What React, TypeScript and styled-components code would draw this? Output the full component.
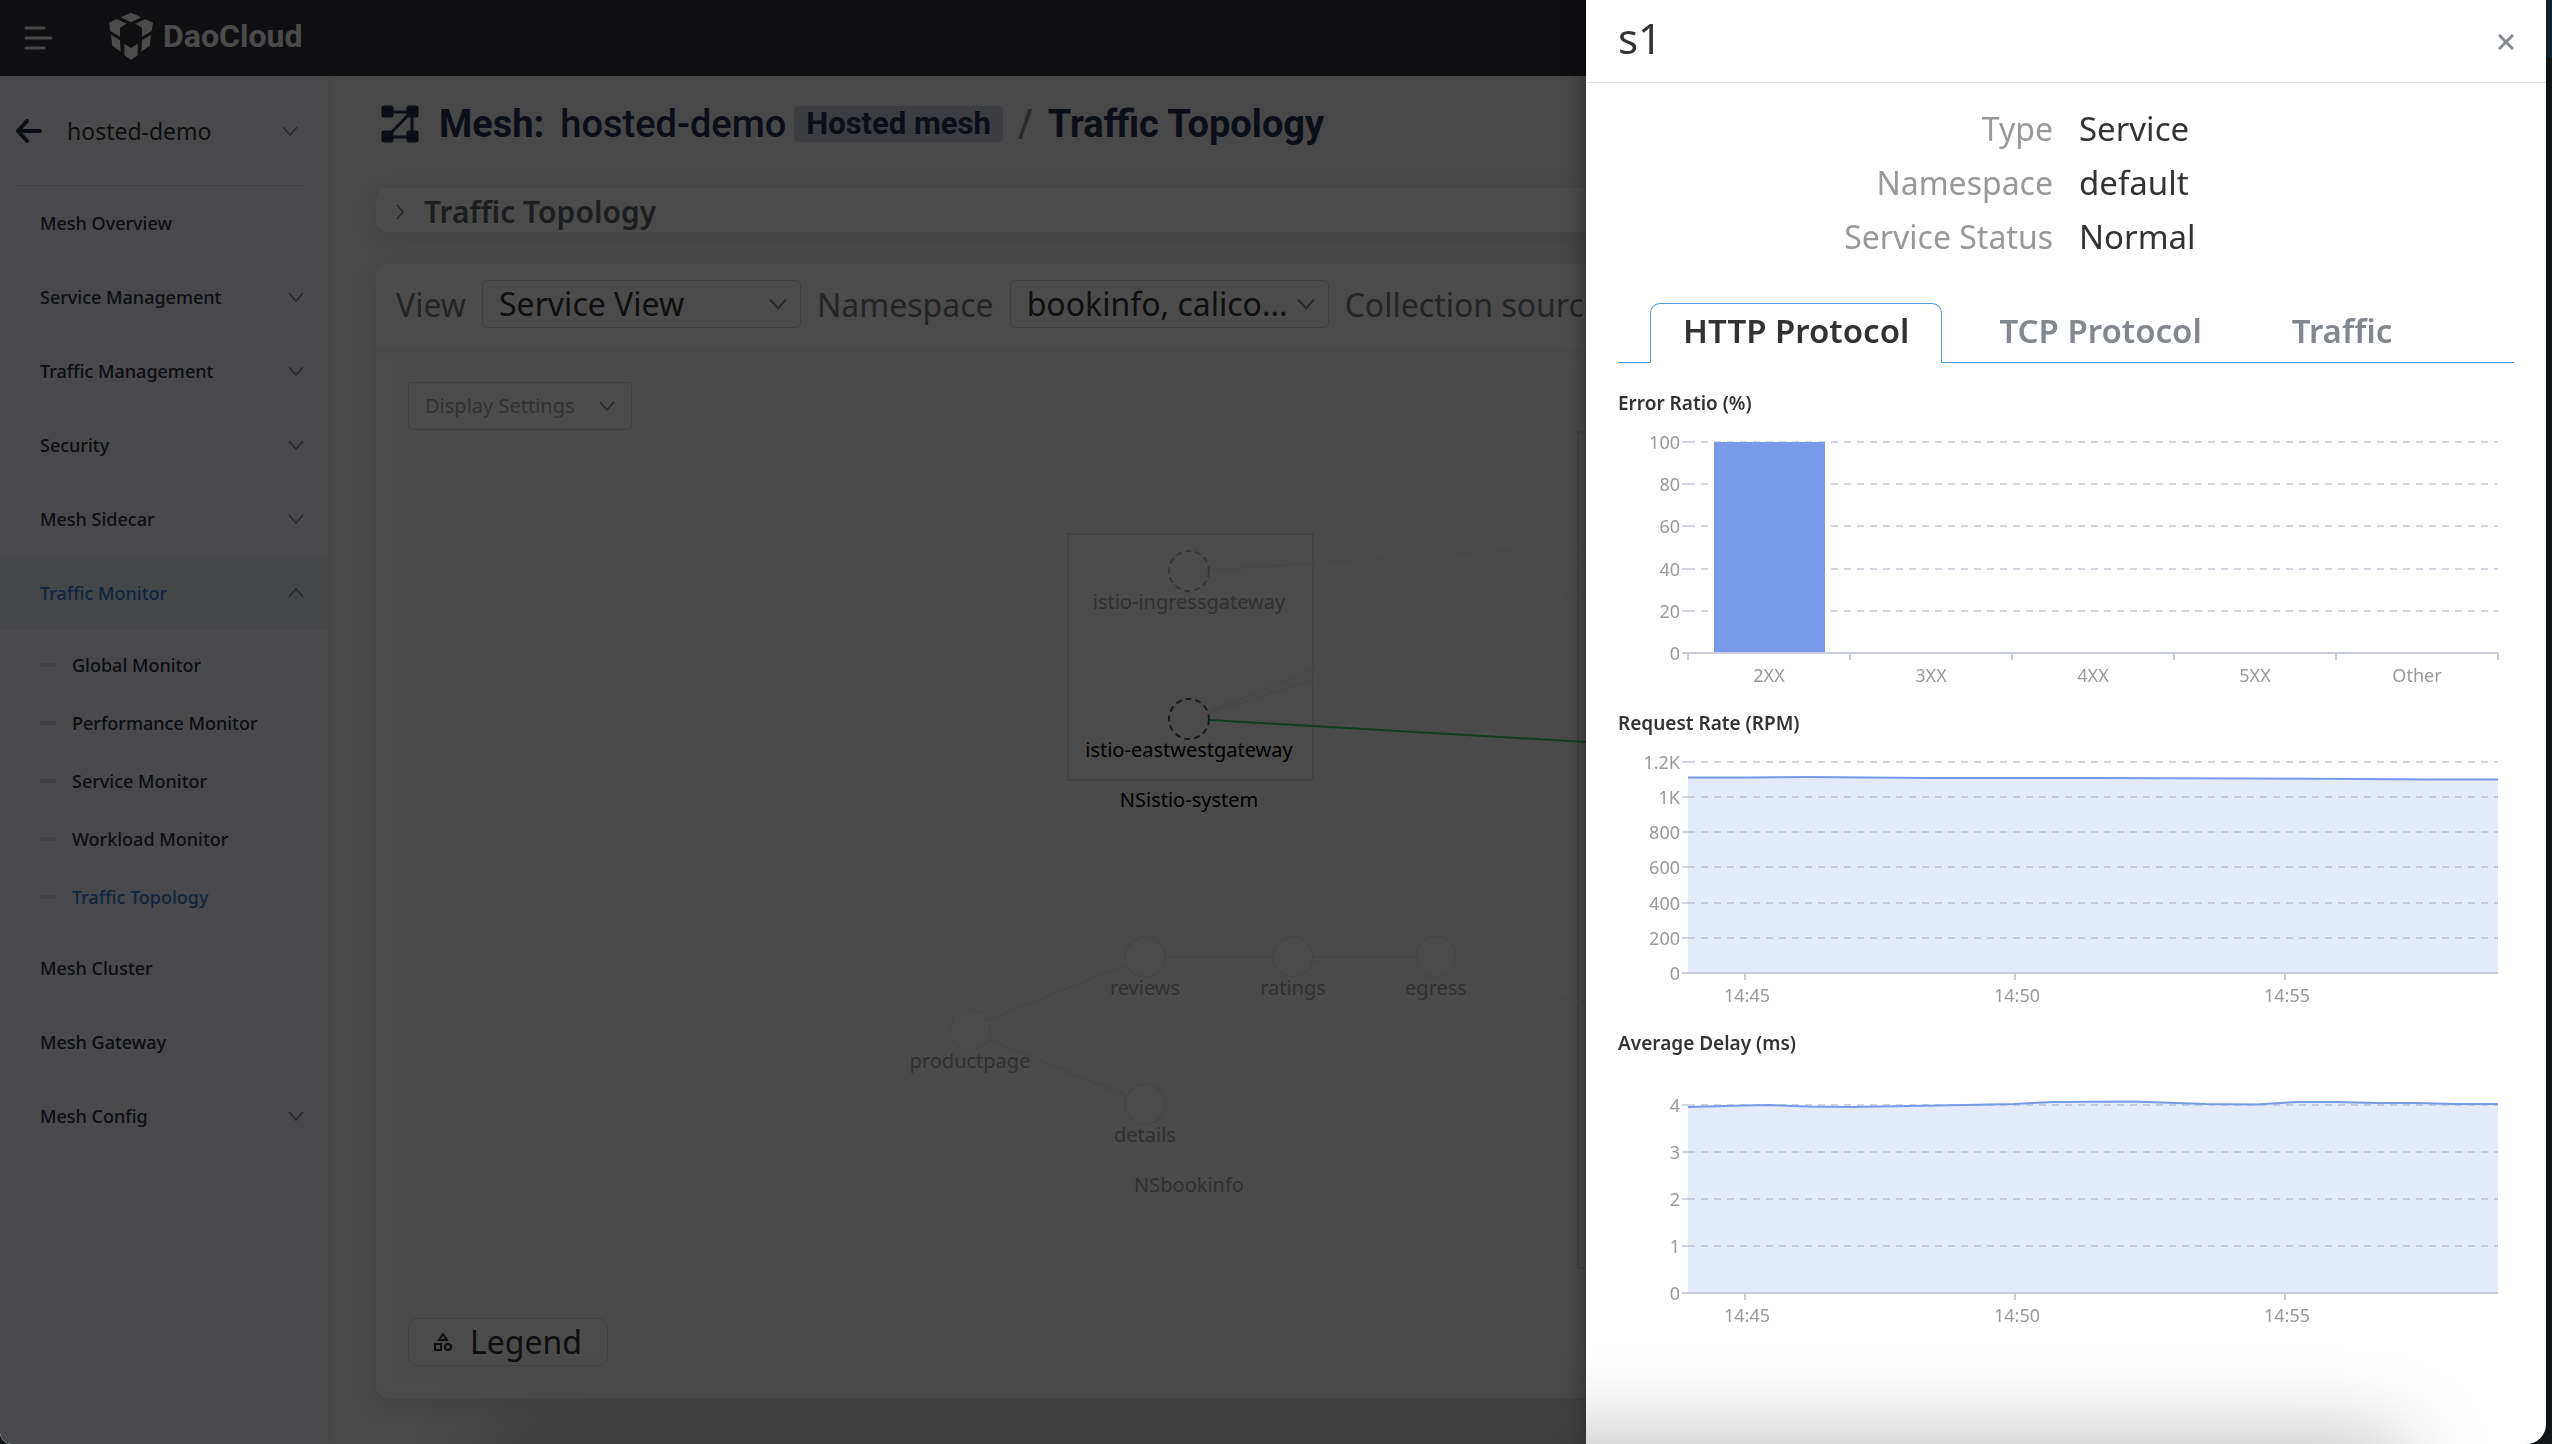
import React, { useState } from "react";
import styled, { createGlobalStyle } from "styled-components";

const sans = `"Noto Sans", "Open Sans", sans-serif`;
const heading = `Roboto, "Noto Sans", sans-serif`;

const GlobalStyle = createGlobalStyle`
  *, *::before, *::after { box-sizing: border-box; }
  body {
    margin: 0;
    font-family: ${sans};
    font-size: 18px;
    color: #333;
    background: linear-gradient(#13243a 58px, #15181a 58px);
    background-attachment: fixed;
  }
  button, select { font: inherit; color: inherit; }
`;

const Window = styled.div`
  position: relative;
  display: flex;
  flex-direction: column;
  min-height: 100vh;
  margin-right: 6px;
  overflow: hidden;
  border-radius: 0 0 20px 12px;
  background: #f0f0f0;
`;

const TopBar = styled.header`
  display: flex;
  align-items: center;
  height: 76px;
  padding: 0 24px;
  gap: 56px;
  background: #32353c;
  color: #fafafa;
`;

const IconButton = styled.button`
  display: flex;
  padding: 0;
  border: 0;
  background: none;
  cursor: pointer;
`;

const Brand = styled.a`
  display: flex;
  align-items: center;
  gap: 10px;
  height: 72px;
  padding-bottom: 4px;
  color: inherit;
  font: 700 32px/40px ${heading};
  text-decoration: none;
`;

const Body = styled.div`
  display: flex;
  flex: 1;
`;

const Sidebar = styled.nav`
  flex: none;
  width: 328px;
  background: #f3f6fb;
  box-shadow: 2px 0 8px rgba(20, 40, 20, 0.08);
  color: #2b2f40;
`;

const Switcher = styled.div`
  display: flex;
  align-items: center;
  height: 110px;
  margin: 0 24px 0 16px;
  gap: 24px;
  border-bottom: 1px solid #d8dce3;
  font-size: 23px;
  color: #333;
  & > span { flex: 1; }
  & > svg { margin-right: 6px; }
`;

const Menu = styled.ul`
  margin: 0;
  padding: 0;
  list-style: none;
`;

const MenuButton = styled.button<{ $active?: boolean }>`
  display: flex;
  align-items: center;
  justify-content: space-between;
  width: 100%;
  height: 74px;
  padding: 0 24px 0 40px;
  border: 0;
  background: ${(p) => (p.$active ? "#e8ebf0" : "transparent")};
  color: ${(p) => (p.$active ? "#3a78d0" : "inherit")};
  font-weight: 500;
  cursor: pointer;
`;

const SubMenu = styled(Menu)`
  padding: 6px 0 5px;
`;

const SubLink = styled.a<{ $active?: boolean }>`
  display: flex;
  align-items: center;
  gap: 16px;
  height: 58px;
  padding-left: 40px;
  color: ${(p) => (p.$active ? "#3a78d0" : "inherit")};
  font-weight: 500;
  text-decoration: none;
  &::before {
    content: "";
    width: 16px;
    height: 4px;
    background: #d3d6db;
  }
`;

const Main = styled.main`
  display: flex;
  flex: 1;
  flex-direction: column;
  min-width: 0;
  padding: 0 48px 46px;
`;

const PageTitle = styled.div`
  display: flex;
  align-items: center;
  height: 96px;
  margin-bottom: 16px;
  padding-left: 5px;
  color: #252f4a;
  font: 500 38px/48px ${heading};
  white-space: nowrap;
  & > svg { margin-right: 20px; }
  & > strong { font-weight: 700; }
`;

const MeshName = styled.span`
  margin: 0 8px 0 16px;
`;

const Tag = styled.span`
  padding: 0 12px;
  border-radius: 4px;
  background: #c5cbdb;
  font-size: 31px;
  font-weight: 700;
  line-height: 36px;
`;

const Slash = styled.span`
  margin: 0 15px;
  color: #8a8d94;
`;

const Card = styled.section`
  border-radius: 12px;
  background: #fafafa;
  box-shadow: 0 6px 24px rgba(30, 50, 70, 0.12);
`;

const Collapse = styled(Card)`
  margin-bottom: 32px;
  & > button {
    display: flex;
    align-items: center;
    gap: 16px;
    width: 100%;
    height: 44px;
    padding: 4px 16px 0;
    border: 0;
    background: none;
    color: #606266;
    font-size: 30px;
    font-weight: 600;
    line-height: 40px;
    cursor: pointer;
  }
`;

const Board = styled(Card)`
  display: flex;
  flex: 1;
  flex-direction: column;
  overflow: hidden;
`;

const Toolbar = styled.div`
  display: flex;
  align-items: center;
  gap: 16px;
  height: 86px;
  padding: 0 20px 6px;
  box-shadow: 0 4px 10px rgba(0, 0, 0, 0.04);
  color: #77797d;
  font-size: 32px;
  white-space: nowrap;
`;

const SelectBox = styled.span`
  display: grid;
  align-items: center;
  width: 319px;
  & > * { grid-area: 1 / 1; }
  & > svg { justify-self: end; margin-right: 14px; pointer-events: none; }
`;

const Select = styled.select`
  width: 100%;
  height: 48px;
  padding: 0 36px 0 16px;
  appearance: none;
  border: 1px solid #cdd0d6;
  border-radius: 5px;
  background: transparent;
  color: #333;
  font-size: 32px;
  line-height: 44px;
`;

const Canvas = styled.div`
  position: relative;
  display: flex;
  flex: 1;
  flex-direction: column;
  align-items: flex-start;
  justify-content: space-between;
  margin: 14px 16px 16px;
  padding: 18px 16px 16px;
  background: #f7f7f7;
`;

const Graph = styled.svg`
  position: absolute;
  inset: 0;
  width: 100%;
  height: 100%;
  font: 20px ${sans};
  text-anchor: middle;
`;

const CanvasButton = styled.button<{ $legend?: boolean }>`
  position: relative;
  display: flex;
  align-items: center;
  justify-content: ${(p) => (p.$legend ? "center" : "space-between")};
  gap: 18px;
  width: ${(p) => (p.$legend ? "200px" : "224px")};
  height: 48px;
  padding: 0 16px;
  border: 1px solid ${(p) => (p.$legend ? "#d4d6da" : "#c8cbd0")};
  border-radius: ${(p) => (p.$legend ? "10px" : "5px")};
  background: #fafafa;
  color: ${(p) => (p.$legend ? "#333" : "#a3a5a9")};
  font-size: ${(p) => (p.$legend ? "32px" : "20px")};
  line-height: 44px;
  cursor: pointer;
`;

const Mask = styled.div`
  position: absolute;
  inset: 0;
  background: rgba(0, 0, 0, 0.7);
`;

const Drawer = styled.aside`
  position: fixed;
  top: 0;
  right: 6px;
  bottom: 0;
  width: 960px;
  max-width: 100%;
  border-bottom-right-radius: 20px;
  background: #fff;
  box-shadow: 0 0 24px rgba(0, 0, 0, 0.4);
  overflow: hidden;
`;

const DrawerHeader = styled.header`
  display: flex;
  align-items: center;
  justify-content: space-between;
  height: 83px;
  padding: 2px 32px 0;
  border-bottom: 1px solid #e0e2ea;
  color: #84888f;
  & > h1 {
    margin: 0;
    padding-bottom: 8px;
    color: #333;
    font-size: 42px;
    font-weight: 400;
    line-height: 48px;
  }
`;

const DrawerBody = styled.div`
  padding: 19px 32px 0;
`;

const Details = styled.dl`
  display: grid;
  grid-template-columns: 1fr 1fr;
  column-gap: 26px;
  margin: 0 0 39px;
  font-size: 32px;
  line-height: 54px;
  & > dt { color: #999; text-align: right; }
  & > dd { margin: 0; font-size: 33px; }
`;

const Tabs = styled.div`
  display: flex;
  align-items: flex-end;
  gap: 24px;
  padding-left: 32px;
  margin-bottom: 24px;
  box-shadow: inset 0 -1px 0 #4f9be0;
`;

const Tab = styled.button<{ $active: boolean }>`
  height: 60px;
  padding: 0 32px 6px;
  border: 1px solid ${(p) => (p.$active ? "#4f9be0" : "transparent")};
  border-bottom: 0;
  border-radius: 10px 10px 0 0;
  background: ${(p) => (p.$active ? "#fff" : "transparent")};
  color: ${(p) => (p.$active ? "#333" : "#83888f")};
  font-size: 33px;
  font-weight: 600;
  line-height: 44px;
  cursor: pointer;
`;

const ChartTitle = styled.h2`
  margin: 0;
  font-size: 19px;
  font-weight: 600;
  line-height: 32px;
`;

const ChartSvg = styled.svg`
  display: block;
  width: 100%;
  height: auto;
  font: 18px ${sans};
  & text { fill: #999; }
`;

const DockShade = styled.div`
  position: fixed;
  top: 100vh;
  left: 500px;
  right: 150px;
  height: 80px;
  box-shadow: 0 0 90px rgba(0, 0, 0, 0.3);
  pointer-events: none;
`;

type Dir = "down" | "up" | "right";
const Chevron = ({ dir = "down", size = 16 }: { dir?: Dir; size?: number }) => (
  <svg width={size} height={size} viewBox="0 0 16 16" fill="none" stroke="#85888f" strokeWidth="1.8" aria-hidden="true">
    <path d={dir === "down" ? "M1 4l7 8 7-8" : dir === "up" ? "M1 12l7-8 7 8" : "M5 1l6 7-6 7"} />
  </svg>
);

const Logo = () => (
  <svg width="44" height="48" viewBox="57 36 132 142" fill="currentColor" aria-hidden="true">
    <path d="M123 37l31 14-31 15-31-15zM80 56l30 14-20 12v27L61 92l-4-25zM166 56l-30 14 20 12v27l29-17 4-25zM63 103l27 17 2 34-25-18zM183 103l-27 17-2 34 25-18zM103 130l20 13 20-13v35l-20 13-20-13z" />
  </svg>
);

const MeshIcon = () => (
  <svg width="38" height="38" viewBox="0 0 38 38" fill="#252f4a" stroke="#252f4a" strokeWidth="3" aria-hidden="true">
    <path d="M6 7h26M6 32h26M31 6v26M31 6L7 31" fill="none" />
    <rect x="2" y="2" width="9" height="9" rx="1" />
    <rect x="27" y="2" width="9" height="9" rx="1" />
    <rect x="2" y="27" width="9" height="9" rx="1" />
    <rect x="27" y="27" width="9" height="9" rx="1" />
  </svg>
);

type Item = { label: string; plain?: boolean; children?: string[] };
const menu: Item[] = [
  { label: "Mesh Overview", plain: true },
  { label: "Service Management" },
  { label: "Traffic Management" },
  { label: "Security" },
  { label: "Mesh Sidecar" },
  {
    label: "Traffic Monitor",
    children: ["Global Monitor", "Performance Monitor", "Service Monitor", "Workload Monitor", "Traffic Topology"],
  },
  { label: "Mesh Cluster", plain: true },
  { label: "Mesh Gateway", plain: true },
  { label: "Mesh Config" },
];

type GraphNode = { x: number; y: number; name: string; tone: "strong" | "dim" | "faint"; dashed?: boolean };
const nodes: GraphNode[] = [
  { x: 797, y: 207, name: "istio-ingressgateway", tone: "dim", dashed: true },
  { x: 797, y: 355, name: "istio-eastwestgateway", tone: "strong", dashed: true },
  { x: 753, y: 593, name: "reviews", tone: "faint" },
  { x: 901, y: 593, name: "ratings", tone: "faint" },
  { x: 1044, y: 593, name: "egress", tone: "faint" },
  { x: 578, y: 666, name: "productpage", tone: "faint", dashed: true },
  { x: 753, y: 740, name: "details", tone: "faint" },
];
const ring = { strong: "#555", dim: "#b0b0b0", faint: "#ececee" };
const ink = { strong: "#000", dim: "#a0a0a0", faint: "#a0a0a0" };

const Topology = () => (
  <Graph role="img" aria-label="Service topology">
    <defs>
      <marker id="arrow" viewBox="0 0 12 12" refX="12" refY="6" markerWidth="12" markerHeight="12" markerUnits="userSpaceOnUse" orient="auto">
        <path d="M0 0l12 6-12 6z" fill="#e6ebea" />
      </marker>
    </defs>
    <rect x="676" y="170" width="245" height="246" fill="#fafafa" stroke="#dcdee2" strokeWidth="2" />
    <rect x="504" y="556" width="589" height="246" fill="#f9f9f9" stroke="#f3f5f5" strokeWidth="2" />
    <rect x="1186" y="68" width="700" height="836" fill="#f9f9f9" stroke="#dcdee2" strokeWidth="2" />
    <g stroke="#eef2f1" strokeWidth="2" fill="none">
      <path d="M818 206l376-25M818 347l376-150M818 349l376-121M922 597l272 41" />
      <path d="M774 593h106M922 593h100M597 656l136-55M597 676l136 55" stroke="#e8edec" markerEnd="url(#arrow)" />
    </g>
    <path d="M818 356l376 22" stroke="#3cc86a" strokeWidth="2" />
    {nodes.map((n) => (
      <g key={n.name}>
        <circle cx={n.x} cy={n.y} r="20" fill="#fafafa" stroke={ring[n.tone]} strokeWidth="2" strokeDasharray={n.dashed ? "6 4" : undefined} />
        <text x={n.x} y={n.y + 38} fill={ink[n.tone]}>{n.name}</text>
      </g>
    ))}
    <text x="797" y="443">NSistio-system</text>
    <text x="797" y="828" fill="#a0a0a0">NSbookinfo</text>
  </Graph>
);

const LEFT = 70;
const RIGHT = 880;
const BASE = 234;

type ChartProps = {
  title: string;
  grid: [string, number][];
  children: React.ReactNode;
};
const Chart = ({ title, grid, children }: ChartProps) => (
  <section>
    <ChartTitle>{title}</ChartTitle>
    <ChartSvg viewBox="0 0 896 288" role="img" aria-label={title}>
      {grid.map(([label, y]) => (
        <g key={label} stroke="#d3d6de" strokeWidth="2">
          <path d={`M${LEFT - 6} ${y}h6`} />
          <path d={`M${LEFT} ${y}H${RIGHT}`} strokeDasharray="7 6" />
          <text x={LEFT - 8} y={y + 7} textAnchor="end" stroke="none">{label}</text>
        </g>
      ))}
      {children}
      <path d={`M${LEFT - 6} ${BASE}H${RIGHT}`} stroke="#c8cdd8" strokeWidth="2" />
      <text x={LEFT - 8} y={BASE + 7} textAnchor="end">0</text>
    </ChartSvg>
  </section>
);

const Area = ({ line }: { line: string }) => (
  <>
    <path d={`M${line}L${RIGHT} ${BASE}H${LEFT}z`} fill="#789ae9" fillOpacity="0.2" />
    <path d={`M${line}`} fill="none" stroke="#789ae9" strokeWidth="2" />
    {["14:45", "14:50", "14:55"].map((t, i) => (
      <g key={t}>
        <path d={`M${127 + i * 270} ${BASE}v7`} stroke="#c8cdd8" strokeWidth="2" />
        <text x={129 + i * 270} y={BASE + 29} textAnchor="middle">{t}</text>
      </g>
    ))}
  </>
);

const tabs = ["HTTP Protocol", "TCP Protocol", "Traffic"];

export default function App() {
  const [tab, setTab] = useState(tabs[0]);
  return (
    <>
      <GlobalStyle />
      <Window>
        <TopBar>
          <IconButton aria-label="Toggle menu">
            <svg width="29" height="24" viewBox="0 0 29 24" stroke="#f0f0f0" strokeWidth="3" strokeLinecap="round" aria-hidden="true">
              <path d="M2 2h18M2 12h25M2 22h18" />
            </svg>
          </IconButton>
          <Brand href="#">
            <Logo />
            DaoCloud
          </Brand>
        </TopBar>
        <Body>
          <Sidebar>
            <Switcher>
              <IconButton aria-label="Back">
                <svg width="27" height="24" viewBox="0 0 27 24" fill="none" stroke="#252f4a" strokeWidth="4" strokeLinecap="round" aria-hidden="true">
                  <path d="M11 2L2 12l9 10M2 12h22" />
                </svg>
              </IconButton>
              <span>hosted-demo</span>
              <Chevron />
            </Switcher>
            <Menu>
              {menu.map((item) => (
                <li key={item.label}>
                  <MenuButton $active={!!item.children}>
                    {item.label}
                    {!item.plain && <Chevron dir={item.children ? "up" : "down"} />}
                  </MenuButton>
                  {item.children && (
                    <SubMenu>
                      {item.children.map((c) => (
                        <li key={c}>
                          <SubLink href="#" $active={c === "Traffic Topology"}>{c}</SubLink>
                        </li>
                      ))}
                    </SubMenu>
                  )}
                </li>
              ))}
            </Menu>
          </Sidebar>
          <Main>
            <PageTitle>
              <MeshIcon />
              <strong>Mesh:</strong>
              <MeshName>hosted-demo</MeshName>
              <Tag>Hosted mesh</Tag>
              <Slash>/</Slash>
              <strong>Traffic Topology</strong>
            </PageTitle>
            <Collapse>
              <button>
                <Chevron dir="right" />
                Traffic Topology
              </button>
            </Collapse>
            <Board>
              <Toolbar>
                <label htmlFor="view">View</label>
                <SelectBox>
                  <Select id="view"><option>Service View</option></Select>
                  <Chevron size={18} />
                </SelectBox>
                <label htmlFor="namespace">Namespace</label>
                <SelectBox>
                  <Select id="namespace"><option>bookinfo, calico...</option></Select>
                  <Chevron size={18} />
                </SelectBox>
                <span>Collection source</span>
              </Toolbar>
              <Canvas>
                <Topology />
                <CanvasButton>
                  Display Settings
                  <Chevron />
                </CanvasButton>
                <CanvasButton $legend>
                  <svg width="18" height="18" viewBox="0 0 18 18" fill="none" stroke="#333" strokeWidth="2" aria-hidden="true">
                    <path d="M9 1l4 6H5zM1 11h6v6H1z" />
                    <circle cx="14" cy="14" r="3" />
                  </svg>
                  Legend
                </CanvasButton>
              </Canvas>
            </Board>
          </Main>
        </Body>
        <Mask />
      </Window>
      <Drawer aria-label="s1">
        <DrawerHeader>
          <h1>s1</h1>
          <IconButton aria-label="Close">
            <svg width="16" height="16" viewBox="0 0 16 16" stroke="#84888f" strokeWidth="3" aria-hidden="true">
              <path d="M1 1l14 14M15 1L1 15" />
            </svg>
          </IconButton>
        </DrawerHeader>
        <DrawerBody>
          <Details>
            <dt>Type</dt>
            <dd>Service</dd>
            <dt>Namespace</dt>
            <dd>default</dd>
            <dt>Service Status</dt>
            <dd>Normal</dd>
          </Details>
          <Tabs role="tablist">
            {tabs.map((t) => (
              <Tab key={t} role="tab" aria-selected={t === tab} $active={t === tab} onClick={() => setTab(t)}>
                {t}
              </Tab>
            ))}
          </Tabs>
          <Chart title="Error Ratio (%)" grid={[["100", 23], ["80", 65], ["60", 107], ["40", 150], ["20", 192]]}>
            <rect x="91" y="24" width="121" height="210" fill="#fff" />
            <rect x="96" y="23" width="111" height="211" fill="#789ae9" />
            {["2XX", "3XX", "4XX", "5XX", "Other"].map((c, i) => (
              <text key={c} x={LEFT + 81 + i * 162} y="263" textAnchor="middle">{c}</text>
            ))}
            {[0, 1, 2, 3, 4, 5].map((i) => (
              <path key={i} d={`M${LEFT + i * 162} ${BASE}v7`} stroke="#c8cdd8" strokeWidth="2" />
            ))}
          </Chart>
          <Chart title="Request Rate (RPM)" grid={[["1.2K", 23], ["1K", 58], ["800", 93], ["600", 128], ["400", 164], ["200", 199]]}>
            <Area line="70 38.5L130 38.5L190 38L250 38.5L310 39L470 39L630 39.5L740 40L810 40.5L880 40.5" />
          </Chart>
          <Chart title="Average Delay (ms)" grid={[["4", 46], ["3", 93], ["2", 140], ["1", 187]]}>
            <Area line="70 48L126 46.5L151 46L191 47.5L232 48L290 47L346 46L396 45L434 43L514 42.5L588 45L638 45.5L678 43L718 43L760 44L800 44L836 45L880 45" />
          </Chart>
        </DrawerBody>
      </Drawer>
      <DockShade />
    </>
  );
}
